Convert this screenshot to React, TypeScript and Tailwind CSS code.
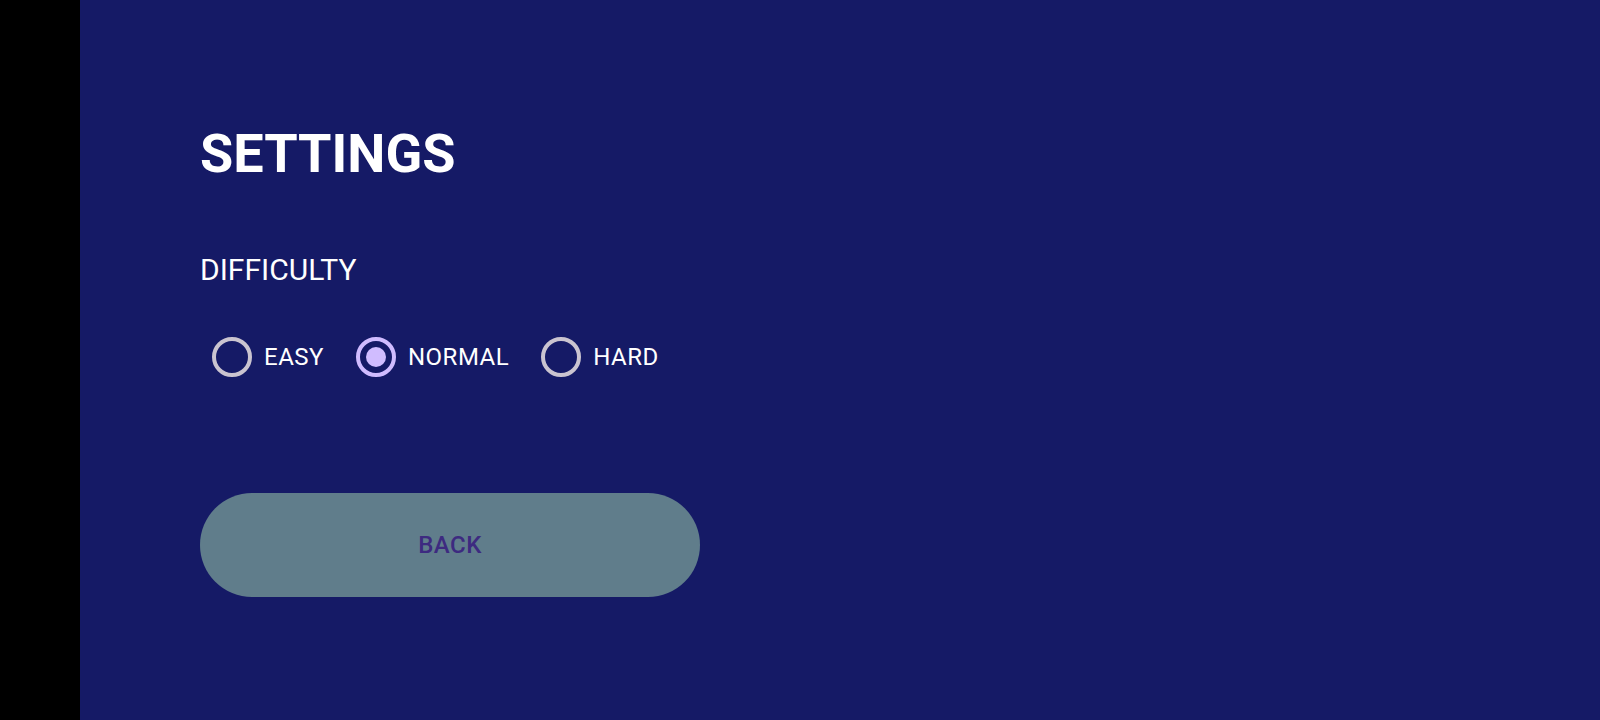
import React, { useState } from "react";

type Level = "EASY" | "NORMAL" | "HARD";

function Radio({ label, checked, onSelect }: { label: Level; checked: boolean; onSelect: () => void }) {
  return (
    <button type="button" onClick={onSelect} className="flex items-center gap-[12px]">
      <span
        className={
          "flex h-[40px] w-[40px] items-center justify-center rounded-full border-[4px] " +
          (checked ? "border-[#d0bcff]" : "border-[#cac4d0]")
        }
      >
        {checked && <span className="h-[20px] w-[20px] rounded-full bg-[#d0bcff]" />}
      </span>
      <span className="text-[24px] leading-[28px] tracking-[0.5px] text-white">{label}</span>
    </button>
  );
}

export default function App() {
  const [level, setLevel] = useState<Level>("NORMAL");
  const levels: Level[] = ["EASY", "NORMAL", "HARD"];
  return (
    <div className="flex h-[720px] w-[1600px] bg-black" style={{ fontFamily: "Roboto, 'Noto Sans', sans-serif" }}>
      <div className="w-[80px] shrink-0 bg-black" />
      <div className="flex flex-1 flex-col bg-[#151a66] pl-[120px] pt-[122px]">
        <h1 className="text-[54px] font-bold leading-[64px] text-white">SETTINGS</h1>
        <h2 className="mt-[66px] text-[30px] leading-[36px] text-white">DIFFICULTY</h2>
        <div className="ml-[12px] mt-[49px] flex items-center gap-[32px]">
          {levels.map((l) => (
            <Radio key={l} label={l} checked={level === l} onSelect={() => setLevel(l)} />
          ))}
        </div>
        <button
          type="button"
          className="mt-[116px] flex h-[104px] w-[500px] items-center justify-center rounded-full bg-[#607d8b] text-[24px] font-medium tracking-[0.5px] text-[#3d2a80]"
        >
          BACK
        </button>
      </div>
    </div>
  );
}
